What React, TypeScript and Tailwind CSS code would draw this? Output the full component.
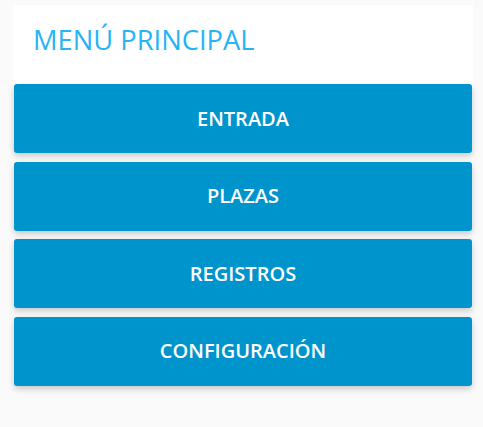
export default function App() {
  const items = ["ENTRADA", "PLAZAS", "REGISTROS", "CONFIGURACIÓN"];
  return (
    <div className="min-h-[427px] w-full bg-[#fafafa] pt-[5px]" style={{ fontFamily: '"Open Sans", sans-serif' }}>
      <div className="mx-[13px] w-[460px] bg-white">
        <div className="h-[79px] pl-[20px] pt-[18px]">
          <h1 className="text-[27.3px] leading-[34px] font-medium text-[#27b4f4]">MENÚ PRINCIPAL</h1>
        </div>
      </div>
      <div className="mx-[14px] flex w-[458px] flex-col gap-[8.67px]">
        {items.map((t) => (
          <button
            key={t}
            className="flex h-[69px] w-full items-center justify-center rounded-[3px] bg-[#0094cd] text-[20px] font-semibold text-white shadow-[0_3px_6px_rgba(0,0,0,0.2)]"
          >
            {t}
          </button>
        ))}
      </div>
    </div>
  );
}
